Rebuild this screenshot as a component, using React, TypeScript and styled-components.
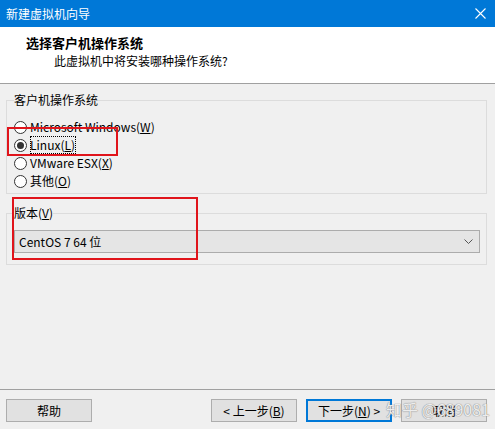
import React, { useState } from "react";
import styled, { createGlobalStyle } from "styled-components";

const GlobalStyle = createGlobalStyle`
  html, body {
    margin: 0;
    padding: 0;
  }
  body {
    font-family: "Noto Sans CJK SC", "Liberation Sans", sans-serif;
    font-size: 12px;
    color: #000;
  }
`;

const StyledWindow = styled.div`
  position: relative;
  width: 495px;
  height: 429px;
  display: flex;
  flex-direction: column;
  background: #f0f0f0;
  overflow: hidden;
`;

const StyledTitleBar = styled.div`
  height: 27px;
  flex: none;
  display: flex;
  align-items: center;
  justify-content: space-between;
  padding: 0 9px 0 6px;
  background: #0078d7;
  color: #fff;
  font-size: 12px;
`;

const StyledHeader = styled.div`
  height: 57px;
  flex: none;
  box-sizing: border-box;
  padding: 7px 0 0 26px;
  background: #fff;
  border-bottom: 1px solid #a0a0a0;
`;

const StyledHeading = styled.div`
  font-size: 13px;
  font-weight: bold;
  line-height: 18px;
`;

const StyledSubHeading = styled.div`
  margin-left: 28px;
  font-size: 12px;
  line-height: 18px;
`;

const StyledMain = styled.div`
  flex: 1;
  display: flex;
  flex-direction: column;
`;

const StyledGroup = styled.fieldset<{ $top: number; $pad: string }>`
  margin: ${(p) => p.$top}px 8px 0 6px;
  padding: ${(p) => p.$pad};
  border: 1px solid #dcdcdc;
  min-width: 0;
`;

const StyledLegend = styled.legend`
  padding: 0;
  margin-left: 0;
  line-height: 16px;
  font-size: 12px;
`;

const StyledRadioRow = styled.label`
  height: 18px;
  display: flex;
  align-items: center;
  gap: 3px;
  line-height: 18px;
`;

const StyledRadioDot = styled.span<{ $checked: boolean }>`
  width: 11px;
  height: 11px;
  flex: none;
  border: 1px solid #333;
  border-radius: 50%;
  background: #fff;
  display: flex;
  align-items: center;
  justify-content: center;
  &::after {
    content: "";
    width: 7px;
    height: 7px;
    border-radius: 50%;
    background: #333;
    display: ${(p) => (p.$checked ? "block" : "none")};
  }
`;

const StyledRadioText = styled.span<{ $focus?: boolean }>`
  outline: ${(p) => (p.$focus ? "1px dotted #000" : "none")};
  outline-offset: -1px;
  padding-right: 1px;
`;

const StyledCombo = styled.div`
  height: 23px;
  box-sizing: border-box;
  display: flex;
  align-items: center;
  justify-content: space-between;
  padding: 0 6px 0 4px;
  background: #e5e5e5;
  border: 1px solid #acacac;
`;

const StyledFooter = styled.div`
  flex: none;
  display: flex;
  justify-content: space-between;
  padding: 9px 8px 7px 6px;
  border-top: 1px solid #a0a0a0;
`;

const StyledButtonGroup = styled.div`
  display: flex;
  gap: 9px;
`;

const StyledButton = styled.button<{ $default?: boolean }>`
  width: 86px;
  height: 23px;
  box-sizing: border-box;
  padding: 0;
  font-family: inherit;
  font-size: 12px;
  color: #000;
  background: #e1e1e1;
  border: ${(p) => (p.$default ? "2px solid #0078d7" : "1px solid #adadad")};
`;

const StyledMark = styled.span`
  position: absolute;
  border: 2px solid #e0141b;
  pointer-events: none;
`;

const StyledWatermark = styled.div`
  position: absolute;
  left: 386px;
  top: 399px;
  font-size: 16px;
  line-height: 20px;
  color: rgba(255, 255, 255, 0.85);
  text-shadow: 0 0 1px #8a8a8a, 0 0 1px #8a8a8a;
  pointer-events: none;
  white-space: nowrap;
`;

const osOptions = [
  { text: "Microsoft Windows", key: "W" },
  { text: "Linux", key: "L" },
  { text: "VMware ESX", key: "X" },
  { text: "其他", key: "O" },
];

const App = () => {
  const [selected, setSelected] = useState("Linux");

  return (
    <>
      <GlobalStyle />
      <StyledWindow>
        <StyledTitleBar>
          <span>新建虚拟机向导</span>
          <svg width="11" height="11" viewBox="0 0 11 11">
            <path d="M0.5 0.5 L10.5 10.5 M10.5 0.5 L0.5 10.5" stroke="#fff" strokeWidth="1.1" />
          </svg>
        </StyledTitleBar>

        <StyledHeader>
          <StyledHeading>选择客户机操作系统</StyledHeading>
          <StyledSubHeading>此虚拟机中将安装哪种操作系统?</StyledSubHeading>
        </StyledHeader>

        <StyledMain>
          <StyledGroup $top={8} $pad="10px 6px 3px 7px">
            <StyledLegend>客户机操作系统</StyledLegend>
            {osOptions.map((os) => (
              <StyledRadioRow key={os.key} onClick={() => setSelected(os.text)}>
                <StyledRadioDot $checked={selected === os.text} />
                <StyledRadioText $focus={selected === os.text}>
                  {os.text}(<u>{os.key}</u>)
                </StyledRadioText>
              </StyledRadioRow>
            ))}
          </StyledGroup>

          <StyledGroup $top={11} $pad="9px 6px 11px 7px">
            <StyledLegend>
              版本(<u>V</u>)
            </StyledLegend>
            <StyledCombo>
              <span>CentOS 7 64 位</span>
              <svg width="9" height="6" viewBox="0 0 9 6">
                <path d="M0.5 0.5 L4.5 4.5 L8.5 0.5" stroke="#555" strokeWidth="1" fill="none" />
              </svg>
            </StyledCombo>
          </StyledGroup>
        </StyledMain>

        <StyledFooter>
          <StyledButton>帮助</StyledButton>
          <StyledButtonGroup>
            <StyledButton>
              &lt; 上一步(<u>B</u>)
            </StyledButton>
            <StyledButton $default>
              下一步(<u>N</u>) &gt;
            </StyledButton>
            <StyledButton>取消</StyledButton>
          </StyledButtonGroup>
        </StyledFooter>

        <StyledMark style={{ left: 7, top: 127, width: 107, height: 25 }} />
        <StyledMark style={{ left: 12, top: 197, width: 182, height: 59 }} />
        <StyledWatermark>知乎 @689081</StyledWatermark>
      </StyledWindow>
    </>
  );
};

export default App;
